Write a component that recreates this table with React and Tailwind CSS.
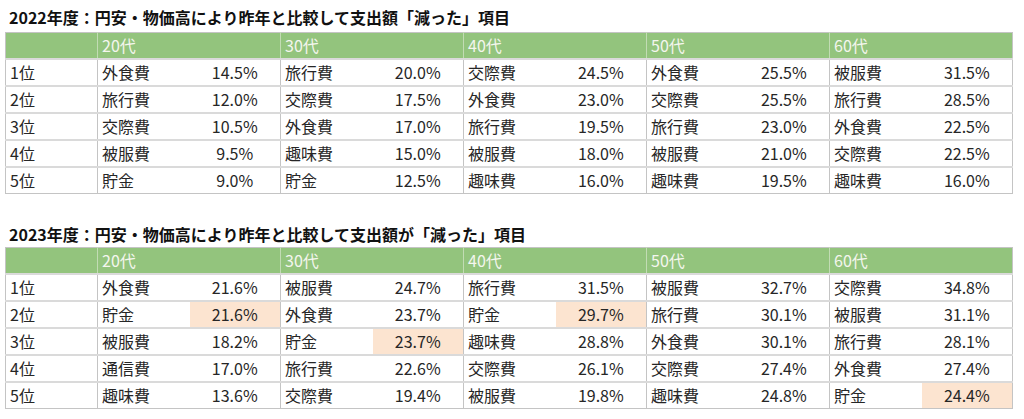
import React from "react";

const ages = ["20代", "30代", "40代", "50代", "60代"];

// [name, value, highlight]
const data2022 = [
  [["外食費", "14.5%"], ["旅行費", "20.0%"], ["交際費", "24.5%"], ["外食費", "25.5%"], ["被服費", "31.5%"]],
  [["旅行費", "12.0%"], ["交際費", "17.5%"], ["外食費", "23.0%"], ["交際費", "25.5%"], ["旅行費", "28.5%"]],
  [["交際費", "10.5%"], ["外食費", "17.0%"], ["旅行費", "19.5%"], ["旅行費", "23.0%"], ["外食費", "22.5%"]],
  [["被服費", "9.5%"], ["趣味費", "15.0%"], ["被服費", "18.0%"], ["被服費", "21.0%"], ["交際費", "22.5%"]],
  [["貯金", "9.0%"], ["貯金", "12.5%"], ["趣味費", "16.0%"], ["趣味費", "19.5%"], ["趣味費", "16.0%"]],
];

const data2023 = [
  [["外食費", "21.6%"], ["被服費", "24.7%"], ["旅行費", "31.5%"], ["被服費", "32.7%"], ["交際費", "34.8%"]],
  [["貯金", "21.6%", true], ["外食費", "23.7%"], ["貯金", "29.7%", true], ["旅行費", "30.1%"], ["被服費", "31.1%"]],
  [["被服費", "18.2%"], ["貯金", "23.7%", true], ["趣味費", "28.8%"], ["外食費", "30.1%"], ["旅行費", "28.1%"]],
  [["通信費", "17.0%"], ["旅行費", "22.6%"], ["交際費", "26.1%"], ["交際費", "27.4%"], ["外食費", "27.4%"]],
  [["趣味費", "13.6%"], ["交際費", "19.4%"], ["被服費", "19.8%"], ["趣味費", "24.8%"], ["貯金", "24.4%", true]],
];

const RankTable = ({ rows }) => {
  return (
    <table className="ml-[5px] w-[1007px] table-fixed border-collapse border border-[#c4c4c4] text-[16px] text-[#262626]">
      <colgroup>
        <col className="w-[92px]" />
        {ages.map((a) => (
          <React.Fragment key={a}>
            <col className="w-[92px]" />
            <col className="w-[91px]" />
          </React.Fragment>
        ))}
      </colgroup>
      <thead>
        <tr className="h-[26px] bg-[#93c47d] text-[#f4f6ee]">
          <th className="p-0"></th>
          {ages.map((a) => (
            <th
              key={a}
              colSpan={2}
              className="border-l border-[#c2dcb4] p-0 pl-[4px] text-left font-normal leading-[20px]"
            >
              {a}
            </th>
          ))}
        </tr>
      </thead>
      <tbody>
        {rows.map((row, i) => (
          <tr key={i} className="h-[27px] border-t-2 border-[#dadada]">
            <td className="p-0 pl-[4px] leading-[20px]">{i + 1}位</td>
            {row.map((cell, j) => (
              <React.Fragment key={j}>
                <td className="border-l border-[#c4c4c4] p-0 pl-[4px] leading-[20px]">
                  {cell[0]}
                </td>
                <td
                  className={
                    cell[2]
                      ? "bg-[#fce4d0] p-0 text-center leading-[20px]"
                      : "p-0 text-center leading-[20px]"
                  }
                >
                  {cell[1]}
                </td>
              </React.Fragment>
            ))}
          </tr>
        ))}
      </tbody>
    </table>
  );
};

export default function App() {
  return (
    <div
      className="h-[419px] w-[1024px] overflow-hidden bg-white"
      style={{ fontFamily: '"Noto Sans CJK JP", "Noto Sans", sans-serif' }}
    >
      <h2 className="pl-[9px] pt-[5px] text-[16px] font-bold leading-[24px] text-[#111]">
        2022年度：円安・物価高により昨年と比較して支出額「減った」項目
      </h2>
      <div className="mt-[3px]">
        <RankTable rows={data2022} />
      </div>
      <h2 className="mt-[28px] pl-[9px] text-[16px] font-bold leading-[24px] text-[#111]">
        2023年度：円安・物価高により昨年と比較して支出額が「減った」項目
      </h2>
      <div className="mt-[1px]">
        <RankTable rows={data2023} />
      </div>
    </div>
  );
}
